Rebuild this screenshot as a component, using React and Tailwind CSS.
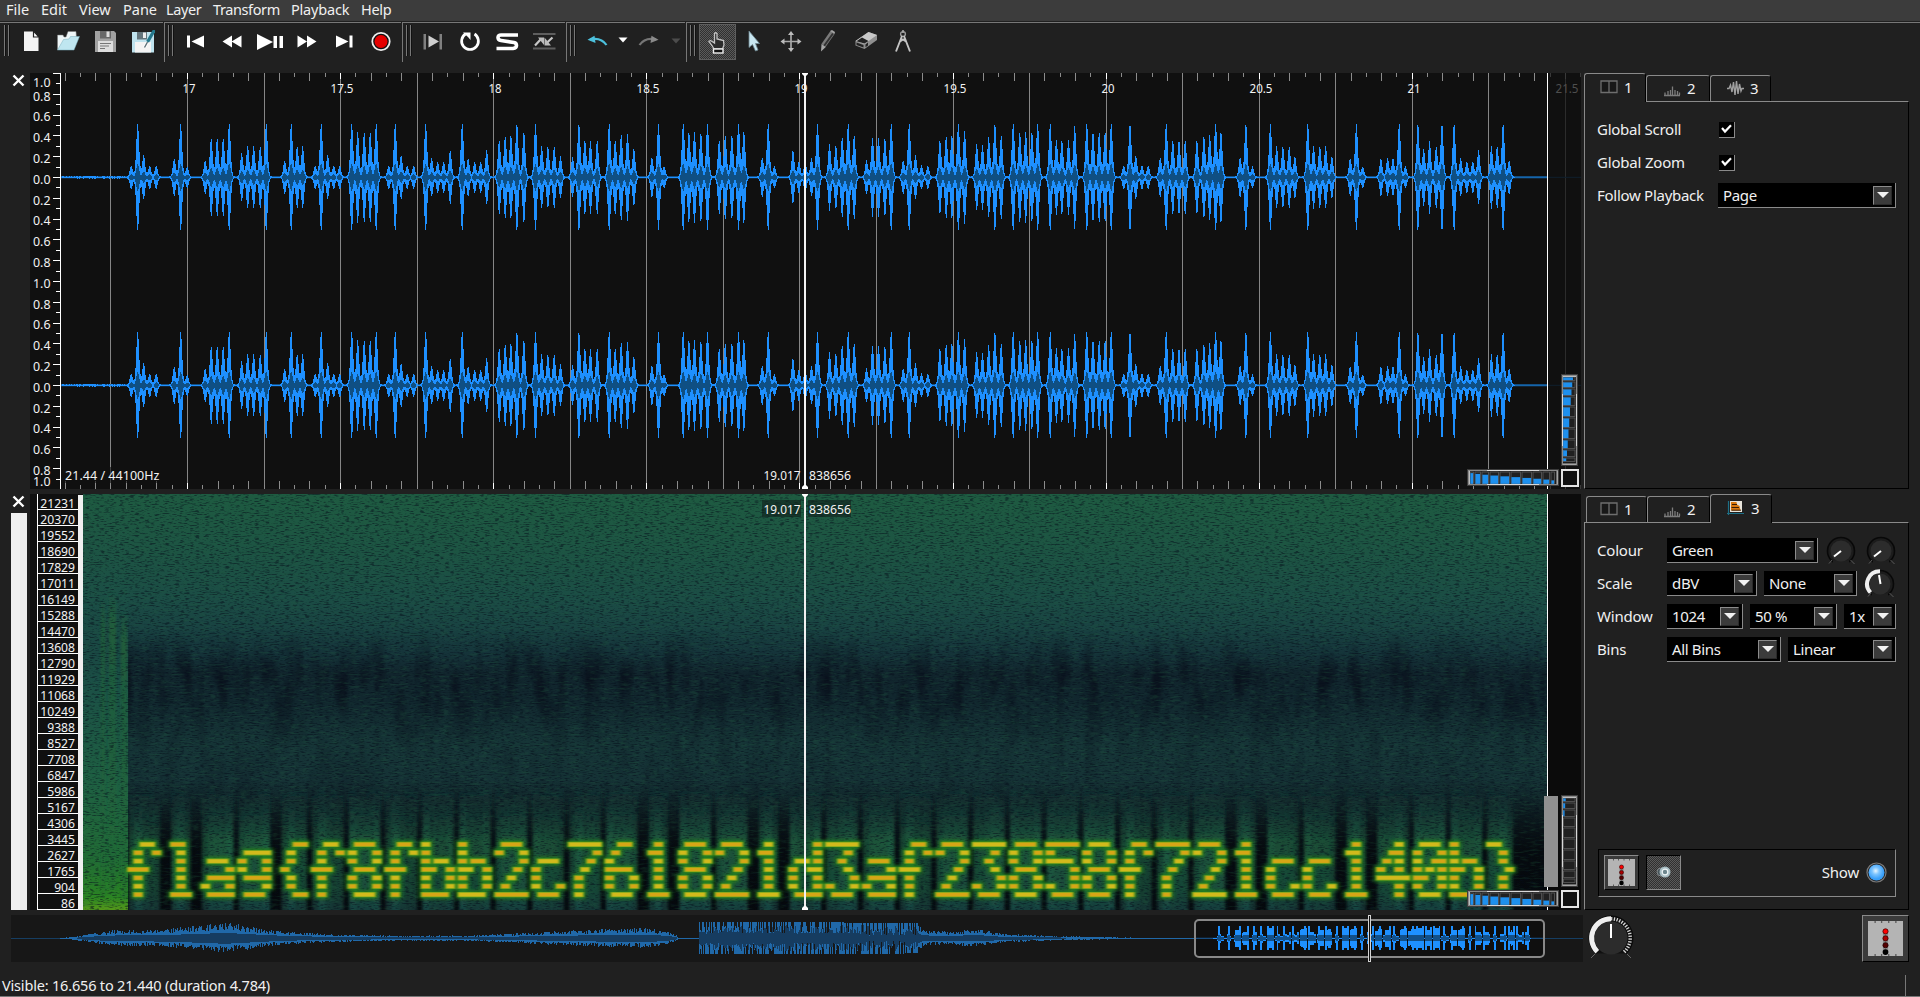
import React from "react";

const PEAKS = [
  [131, 11], [137.5, 53], [143.5, 21], [149.5, 11], [156, 11],
  [174, 18], [180.5, 53], [187, 10],
  [205, 16], [211, 38], [217, 38], [223, 38], [229, 53],
  [241.5, 23], [247.5, 30], [253.5, 30], [260, 30], [266, 53],
  [284.5, 16], [291, 53], [297, 30], [302.5, 30],
  [315, 11], [321, 53], [327.5, 21], [333.5, 11], [339.5, 11],
  [351.5, 53], [357.5, 44], [364, 44], [370, 44], [376, 53],
  [388.5, 11], [395, 53], [401, 21], [407, 11], [413.5, 11],
  [425.5, 53], [431.5, 18], [437.5, 15], [443.5, 15], [450, 26],
  [462, 53], [468, 18], [474.5, 15], [480.5, 15], [486.5, 26],
  [499, 36], [505, 40], [510.7, 41], [516.7, 53], [523.7, 45],
  [535.3, 53], [541.5, 30], [547.7, 30], [554, 30], [560.3, 20],
  [572.3, 19], [578.7, 53], [584.7, 36], [590.3, 35], [597, 36],
  [609, 53], [615, 36], [621, 42], [627.3, 42], [633.7, 28],
  [651.7, 19], [658.3, 53], [664, 10],
  [683, 53], [688.7, 44], [694.3, 44], [700.7, 44], [707.3, 53],
  [719, 36], [725, 41], [731.7, 41], [738.3, 53], [743.7, 45],
  [762, 19], [768, 53], [774.3, 10],
  [792.7, 26], [798.7, 15], [805, 15], [811.3, 18], [817.3, 53],
  [829.3, 32], [835.7, 31], [842, 39], [848, 53], [854, 41],
  [866.3, 16], [872.3, 38], [878.3, 38], [884.7, 38], [891, 53],
  [903, 16], [909, 53], [915.3, 21], [921.3, 11], [927.7, 11],
  [939.7, 36], [946, 40], [951.7, 41], [958.2, 53], [964.4, 45],
  [976.5, 32], [982.3, 31], [988.5, 39], [994.7, 53], [1001, 41],
  [1013, 53], [1019.6, 44], [1025.5, 44], [1031.7, 44], [1037.5, 53],
  [1050, 53], [1056.2, 36], [1061.7, 36], [1068.3, 36], [1074.5, 50],
  [1086.6, 53], [1092.8, 44], [1099, 44], [1104.9, 44], [1111, 53],
  [1123.5, 11], [1129.8, 53], [1135.6, 21], [1141.8, 11], [1148, 11],
  [1160, 19], [1166, 53], [1172.6, 36], [1178.8, 36], [1185, 36],
  [1196.7, 36], [1203.7, 40], [1209.5, 41], [1215.4, 53], [1220.8, 45],
  [1239.9, 19], [1245.7, 53], [1252.3, 10],
  [1270.2, 53], [1276.5, 30], [1282.7, 30], [1289, 30], [1294.7, 20],
  [1307.6, 53], [1313.4, 30], [1319.6, 30], [1325.5, 30], [1331.7, 20],
  [1350, 18], [1356.2, 53], [1362.5, 10],
  [1380.7, 18], [1387.4, 18], [1392.8, 18], [1399, 53], [1405.3, 10],
  [1417.7, 53], [1423.5, 27], [1429.4, 35], [1436, 30], [1441.8, 53],
  [1453.9, 53], [1460.5, 18], [1466.7, 15], [1472.6, 15], [1478.4, 26],
  [1491.2, 30], [1497, 30], [1502.9, 53], [1509, 16],
];

const GLYPHS = {
  f: "..##. .#..# .#... ###.. .#... .#... .#...",
  l: ".##.. ..#.. ..#.. ..#.. ..#.. ..#.. .###.",
  a: "..... ..... .###. ....# .#### #...# .####",
  g: "..... .#### #...# #...# .#### ....# .###.",
  "{": "...## ..#.. ..#.. .#... ..#.. ..#.. ...##",
  8: ".###. #...# #...# .###. #...# #...# .###.",
  b: "#.... #.... #.##. ##..# #...# #...# ####.",
  2: ".###. #...# ....# ...#. ..#.. .#... #####",
  c: "..... ..... .###. #.... #.... #...# .###.",
  7: "##### ....# ...#. ..#.. .#... .#... .#...",
  6: "..##. .#... #.... ####. #...# #...# .###.",
  1: "..#.. .##.. ..#.. ..#.. ..#.. ..#.. .###.",
  d: "....# ....# .##.# #..## #...# #...# .####",
  3: "##### ...#. ..#.. ...#. ....# #...# .###.",
  5: "##### #.... ####. ....# ....# #...# .###.",
  4: "...#. ..##. .#.#. #..#. ##### ...#. ...#.",
  0: ".###. #...# #..## #.#.# ##..# #...# .###.",
  "}": "##... ..#.. ..#.. ...#. ..#.. ..#.. ##...",
};
const MESSAGE = "flag{f8fbb2c761821d3af23858f721cc140b}";

const SANS = '"Noto Sans", "Open Sans", sans-serif';

const rand = (n) => {
  const s = Math.sin(n * 127.1 + 11.7) * 43758.5453;
  return s - Math.floor(s);
};

/* Horizontal runs of lit cells and the list of lit columns in the spectrum message */
const RUNS = [];
const COLUMNS = [];
MESSAGE.split("").forEach((ch, k) => {
  const rows = GLYPHS[ch].split(" ");
  const x0 = 132 + 36.73 * k;
  rows.forEach((row, r) => {
    let c = 0;
    while (c < 5) {
      if (row[c] === "#") {
        let e = c;
        while (e < 4 && row[e + 1] === "#") e += 1;
        RUNS.push([x0 + 6.12 * c, x0 + 6.12 * e, 844.4 + 8.37 * r]);
        c = e + 1;
      } else c += 1;
    }
  });
  for (let c = 0; c < 5; c += 1) {
    const n = rows.filter((row) => row[c] === "#").length;
    if (n) COLUMNS.push([x0 + 6.12 * c, n]);
  }
});

function buildWave(cy) {
  let outer = "";
  let inner = "";
  for (let x = 62; x < 1515; x += 1) {
    let a = 0.6;
    let m = 0.4;
    if (x < 129) a = 0.4 + rand(x) * 1;
    PEAKS.forEach(([p, h]) => {
      const d = Math.abs(x - p + 0.3);
      if (d < 8) {
        a += h * (0.88 * Math.exp(-((d / 1.9) ** 2)) + 0.14 * Math.exp(-((d / 3) ** 2)));
        m += h * 0.25 * Math.exp(-((d / 2) ** 2));
      }
    });
    a = Math.min(a, 53);
    m = Math.min(m, a * 0.6);
    outer += `M${x + 0.5} ${(cy - a).toFixed(1)}V${(cy + a).toFixed(1)}`;
    if (m > 1) inner += `M${x + 0.5} ${(cy - m).toFixed(1)}V${(cy + m).toFixed(1)}`;
  }
  return { outer, inner };
}

function Wave({ cy }) {
  const w = buildWave(cy);
  return (
    <g fill="none">
      <path d={`M61 ${cy}H1547`} stroke="#1565ab" strokeWidth="2" />
      <path d={`M1548 ${cy}H1581`} stroke="#10202e" strokeWidth="1" />
      <path d={w.outer} stroke="#1e90ff" shapeRendering="crispEdges" />
      <path d={w.inner} stroke="#0f4f83" shapeRendering="crispEdges" />
    </g>
  );
}

const PX = 306.2;
const timeX = (t) => Math.round(187 + (t - 17) * PX);

function TimeGrid() {
  const lines = [];
  for (let i = 0; i <= 101; i += 1) {
    const t = 16.6 + i * 0.05;
    const x = timeX(t) + 0.5;
    if (x > 1581) break;
    const n = Math.round(t * 20);
    const dim = x > 1549;
    const major = n % 10 === 0;
    if (n % 5 === 0) lines.push(<path key={`g${i}`} d={`M${x} 73V489`} stroke={dim ? "#2c2c2c" : "#868686"} />);
    const len = major ? 6 : n % 2 === 0 ? 8 : 4;
    lines.push(
      <path key={i} d={`M${x} 73v${len}M${x} 489v-${len}`} stroke={dim ? "#3a3a3a" : major ? "#ffffff" : "#8c8c8c"} />
    );
  }
  return <g>{lines}</g>;
}

function Wheel({ x, y, vertical, level }) {
  const edges = [0, 5, 12, 20, 30, 41, 52, 63, 73, 81, 86];
  const len = 86;
  return (
    <g transform={vertical ? `translate(${x + 17} ${y}) rotate(90)` : `translate(${x} ${y})`}>
      <rect x="0.5" y="0.5" width="91" height="16" fill="#161616" stroke="#3c3c3c" />
      <rect x="1.5" y="1.5" width="89" height="14" fill="#1b1b1b" stroke="#8a8a8a" />
      <path d="M20 1.5H72M20 15.5H72" stroke="#d8d8d8" />
      {edges.slice(0, 10).map((e, i) => {
        const w = edges[i + 1] - e - 1.5;
        const h = level(i) * 11.5;
        return (
          <g key={e}>
            <rect x={3 + e} y="3" width={w} height="11.5" fill="#202020" stroke="#5c5c5c" strokeWidth="0.8" />
            {h > 0 && <rect x={3.4 + e} y={14.8 - h} width={Math.max(w - 0.8, 1)} height={h} fill="#1e90ee" />}
          </g>
        );
      })}
      <path d={`M2.5 2V15M${len + 4} 2V15`} stroke="#bdbdbd" />
    </g>
  );
}

function Txt({ x, y, w, anchor = "start", fill = "#f2f2f2", size = 12, children }) {
  return (
    <text x={x} y={y} fontSize={size} fill={fill} textAnchor={anchor} fontFamily={SANS} textLength={w} lengthAdjust="spacingAndGlyphs">
      {children}
    </text>
  );
}

function WaveformPane() {
  const labels = [];
  const halves = [[177.3, true], [385.3, false]];
  halves.forEach(([c, first]) => {
    for (let i = -4; i <= 4; i += 1) {
      labels.push([c + 2 + i * 20.8, (Math.abs(i) / 5).toFixed(1)]);
    }
    labels.push([first ? 82 : 481.5, "1.0"]);
  });
  labels.push([283.5, "1.0"]);
  const ticks = [];
  for (let i = 0; i <= 40; i += 1) {
    const y = Math.round(73 + i * 10.4) + 0.5;
    if (y < 489) ticks.push(`M${i % 2 ? 56 : 53} ${y}H61`);
  }
  return (
    <svg className="block h-[416px] w-[1551px]" viewBox="30 73 1551 416">
      <rect x="30" y="73" width="1551" height="416" fill="#101010" />
      <TimeGrid />
      <Wave cy={177.3} />
      <Wave cy={385.3} />
      <path d="M60.5 73V489" stroke="#fff" />
      <path d={ticks.join("")} stroke="#fff" shapeRendering="crispEdges" />
      {labels.map(([y, s], i) => (
        <Txt key={i} x={50.5} y={y + 4.5} anchor="end" w={17.5}>{s}</Txt>
      ))}
      {["17", "17.5", "18", "18.5", "19", "19.5", "20", "20.5", "21", "21.5"].map((s) => (
        <Txt key={s} x={timeX(Number(s)) + 2} y={93} anchor="middle" w={s.length === 2 ? 13 : 23} fill={s === "21.5" ? "#4e4e4e" : "#f4f4f4"}>
          {s}
        </Txt>
      ))}
      <rect x="64" y="467" width="96" height="16" fill="#101010" opacity="0.6" />
      <Txt x={65} y={480} w={94.5}>21.44 / 44100Hz</Txt>
      <Txt x={763.5} y={480} w={37}>19.017</Txt>
      <Txt x={809} y={480} w={42}>838656</Txt>
      <rect x="804" y="73" width="2" height="416" fill="#f4f4f4" />
      <path d="M802 73h6v1l-2 2h-2l-2-2zM802 489h6v-2l-2-2h-2l-2 2z" fill="#fff" />
      <path d="M1547.5 73V489" stroke="#fff" />
      <Wheel x={1561} y={374} vertical level={(i) => 0.85 - i * 0.065} />
      <Wheel x={1467} y={469} level={(i) => 0.93 - i * 0.07} />
      <rect x="1562" y="470" width="16" height="16" fill="#101010" stroke="#e4e4e4" strokeWidth="2" />
    </svg>
  );
}

const BINS = [
  21231, 20370, 19552, 18690, 17829, 17011, 16149, 15288, 14470, 13608, 12790, 11929, 11068, 10249,
  9388, 8527, 7708, 6847, 5986, 5167, 4306, 3445, 2627, 1765, 904, 86,
];

function SpectrumDefs() {
  return (
    <defs>
      <linearGradient id="base" x1="0" y1="0" x2="0" y2="1">
        <stop offset="0" stopColor="#1e5b41" />
        <stop offset="0.12" stopColor="#1d5543" />
        <stop offset="0.25" stopColor="#1b4d45" />
        <stop offset="0.32" stopColor="#194342" />
        <stop offset="0.38" stopColor="#15343a" />
        <stop offset="0.43" stopColor="#11252d" />
        <stop offset="0.5" stopColor="#11272e" />
        <stop offset="0.6" stopColor="#163537" />
        <stop offset="0.72" stopColor="#153135" />
        <stop offset="0.82" stopColor="#122529" />
        <stop offset="1" stopColor="#0c181c" />
      </linearGradient>
      <linearGradient id="intro" x1="0" y1="0" x2="0" y2="1">
        <stop offset="0" stopColor="#1f5b44" stopOpacity="0" />
        <stop offset="0.3" stopColor="#1b4f46" stopOpacity="0.5" />
        <stop offset="0.45" stopColor="#1b4f46" />
        <stop offset="0.7" stopColor="#1e6042" />
        <stop offset="0.88" stopColor="#216c34" />
        <stop offset="0.97" stopColor="#2b8522" />
        <stop offset="1" stopColor="#55991a" />
      </linearGradient>
      <linearGradient id="streak" x1="0" y1="0" x2="0" y2="1">
        <stop offset="0" stopColor="#206438" stopOpacity="0" />
        <stop offset="0.1" stopColor="#206438" stopOpacity="0.75" />
        <stop offset="1" stopColor="#206438" stopOpacity="0.3" />
      </linearGradient>
      <linearGradient id="glow" gradientUnits="userSpaceOnUse" x1="0" y1="785" x2="0" y2="910">
        <stop offset="0" stopColor="#1a443e" stopOpacity="0" />
        <stop offset="0.25" stopColor="#1b4e42" stopOpacity="0.6" />
        <stop offset="0.45" stopColor="#1e5e40" stopOpacity="0.95" />
        <stop offset="0.85" stopColor="#1c5642" stopOpacity="0.95" />
        <stop offset="1" stopColor="#1a4846" stopOpacity="0.9" />
      </linearGradient>
      <linearGradient id="dark" gradientUnits="userSpaceOnUse" x1="0" y1="780" x2="0" y2="850">
        <stop offset="0" stopColor="#04060a" stopOpacity="0" />
        <stop offset="1" stopColor="#04060a" stopOpacity="0.85" />
      </linearGradient>
      <filter id="grainDark" x="0" y="0" width="1" height="1" colorInterpolationFilters="sRGB">
        <feTurbulence type="fractalNoise" baseFrequency="0.2 0.9" numOctaves="2" seed="4" />
        <feColorMatrix values="0 0 0 0 0.02  0 0 0 0 0.05  0 0 0 0 0.1  4 0 0 0 -2.0" />
      </filter>
      <filter id="grainLight" x="0" y="0" width="1" height="1" colorInterpolationFilters="sRGB">
        <feTurbulence type="fractalNoise" baseFrequency="0.1 0.5" numOctaves="2" seed="19" />
        <feColorMatrix values="0 0 0 0 0.13  0 0 0 0 0.36  0 0 0 0 0.25  0 3.5 0 0 -1.7" />
      </filter>
      <filter id="bands" x="0" y="0" width="1" height="1" colorInterpolationFilters="sRGB">
        <feTurbulence type="fractalNoise" baseFrequency="0.06 0.016" numOctaves="2" seed="8" />
        <feColorMatrix values="0 0 0 0 0.03  0 0 0 0 0.04  0 0 0 0 0.09  3.5 0 0 0 -1.6" />
      </filter>
      <filter id="b1" x="-5%" y="-20%" width="110%" height="140%"><feGaussianBlur stdDeviation="0.8 0.6" /></filter>
      <filter id="b2" x="-5%" y="-20%" width="110%" height="140%"><feGaussianBlur stdDeviation="1.9 1.6" /></filter>
      <filter id="bx" x="-5%" y="-5%" width="110%" height="110%"><feGaussianBlur stdDeviation="1.6 0" /></filter>
      <linearGradient id="midFade" x1="0" y1="0" x2="0" y2="1">
        <stop offset="0" stopColor="#000" />
        <stop offset="0.25" stopColor="#fff" />
        <stop offset="0.45" stopColor="#555" />
        <stop offset="0.7" stopColor="#333" />
        <stop offset="1" stopColor="#444" />
      </linearGradient>
      <mask id="mid"><rect x="128" y="630" width="1420" height="210" fill="url(#midFade)" /></mask>
      <clipPath id="plot"><rect x="83" y="494" width="1464" height="416" /></clipPath>
    </defs>
  );
}

function SpectrumPane() {
  return (
    <svg className="block h-[416px] w-[1551px]" viewBox="30 494 1551 416">
      <SpectrumDefs />
      <rect x="30" y="494" width="1551" height="416" fill="#0b0b0b" />
      <g clipPath="url(#plot)">
        <rect x="83" y="494" width="1464" height="416" fill="url(#base)" />
        <g mask="url(#mid)">
          <rect x="128" y="630" width="1420" height="210" filter="url(#bands)" opacity="0.7" />
        </g>
        <rect x="128" y="780" width="1420" height="130" fill="url(#dark)" />
        <g filter="url(#bx)">
          {COLUMNS.map(([x, n], i) => (
            <rect key={i} x={x - 3.4} y={785 + rand(i) * 14} width="6.8" height="130" fill="url(#glow)" opacity={0.6 + Math.min(n, 4) * 0.1} />
          ))}
        </g>
        <rect x="83" y="494" width="45" height="416" fill="url(#intro)" />
        <g filter="url(#bx)">
          <rect x="101" y="596" width="4" height="300" fill="url(#streak)" />
          <rect x="109" y="590" width="7" height="300" fill="url(#streak)" />
          <rect x="121" y="610" width="6" height="290" fill="url(#streak)" />
        </g>
        <rect x="83" y="494" width="1464" height="416" filter="url(#grainLight)" opacity="0.28" />
        <rect x="83" y="494" width="1464" height="416" filter="url(#grainDark)" opacity="0.5" />
        <g filter="url(#b2)" fill="#22831f">
          {RUNS.map(([a, b, y], i) => <rect key={i} x={a - 6.5} y={y - 4.2} width={b - a + 13} height="8.4" opacity="0.9" />)}
        </g>
        <g filter="url(#b1)">
          {RUNS.map(([a, b, y], i) => <rect key={i} x={a - 5} y={y - 2.6} width={b - a + 10} height="5.2" fill="#86a81c" />)}
          {RUNS.map(([a, b, y], i) => (
            <rect key={`c${i}`} x={a - 3.8} y={y - 1.8} width={b - a + 7.6} height="3.6" fill={i % 3 ? "#d6a616" : "#d2ba1c"} />
          ))}
        </g>
      </g>
      <rect x="30" y="494" width="53" height="416" fill="#101010" />
      <path d="M37.5 494V910" stroke="#fff" />
      <rect x="78" y="495" width="5" height="415" fill="#f0f0f0" />
      {BINS.map((b, i) => (
        <g key={b}>
          <path d={`M37 ${509.5 + 16 * i}H78`} stroke="#fff" />
          <Txt x={75} y={508 + 16 * i} anchor="end" w={String(b).length * 6.95}>{b}</Txt>
        </g>
      ))}
      <rect x="762" y="500" width="39" height="17" fill="#10201c" opacity="0.6" />
      <rect x="808" y="500" width="43" height="17" fill="#10201c" opacity="0.6" />
      <Txt x={763.5} y={514} w={37}>19.017</Txt>
      <Txt x={809} y={514} w={42}>838656</Txt>
      <rect x="804" y="494" width="2" height="416" fill="#f0f0f0" />
      <path d="M802 494h6v1l-2 2h-2l-2-2zM802 910h6v-2l-2-2h-2l-2 2z" fill="#fff" />
      <path d="M1547.5 494V910" stroke="#fff" />
      <rect x="1544" y="796" width="14" height="91" fill="#909090" />
      <Wheel x={1561} y={795} vertical level={(i) => (i < 3 ? 0.22 - i * 0.05 : 0)} />
      <Wheel x={1467} y={890} level={(i) => 0.93 - i * 0.07} />
      <rect x="1562" y="891" width="16" height="16" fill="#101010" stroke="#e4e4e4" strokeWidth="2" />
    </svg>
  );
}

const ENVELOPE = [
  [60, 0.5], [72, 1.5], [90, 5], [115, 8.5], [150, 9], [190, 12], [225, 16], [245, 13], [270, 9], [300, 6], [340, 4],
  [400, 2.8], [470, 3], [510, 5], [560, 7.5], [610, 10], [650, 10.5], [668, 7], [676, 3], [678, 0.7], [698, 0.7],
  [699, 16], [830, 16], [918, 15], [922, 9], [950, 6.5], [966, 9], [980, 9], [1000, 5], [1040, 3], [1080, 2], [1120, 1], [1194, 0.5],
];
function envelopeAt(x) {
  for (let i = 1; i < ENVELOPE.length; i += 1) {
    const [x1, v1] = ENVELOPE[i];
    if (x <= x1) {
      const [x0, v0] = ENVELOPE[i - 1];
      return v0 + ((x - x0) / (x1 - x0)) * (v1 - v0);
    }
  }
  return 0.5;
}

function Overview() {
  let outer = "";
  let inner = "";
  const cy = 938.3;
  for (let x = 60; x < 1194; x += 1) {
    const e = envelopeAt(x);
    const dense = x >= 699 && x < 918;
    const low = x < 860 ? 0.3 : 0.15;
    const up = dense ? (rand(x) > 0.38 ? e : e * (low + 0.5 * rand(x * 3))) : e * (0.5 + 0.5 * rand(x));
    const dn = dense ? (rand(x + 900) > 0.38 ? e : e * (low + 0.5 * rand(x * 5))) : e * (0.45 + 0.45 * rand(x + 500));
    outer += `M${x + 0.5} ${(cy - up).toFixed(1)}V${(cy + dn).toFixed(1)}`;
    const m = dense ? Math.min(e * (0.3 + 0.55 * rand(x * 7)), up, dn) : e * 0.34;
    if (m > 0.8) inner += `M${x + 0.5} ${(cy - m).toFixed(1)}V${(cy + m).toFixed(1)}`;
  }
  let live = "";
  let liveIn = "";
  for (let x = 1213; x < 1531; x += 1) {
    let a = 0.6;
    PEAKS.forEach(([p, h]) => {
      if (Math.abs(1218.7 + (p - 137.5) * 0.2263 - x) < 0.9) a = Math.max(a, h * 0.226);
    });
    live += `M${x + 0.5} ${cy - a}V${cy + a}`;
    if (a > 1.5) liveIn += `M${x + 0.5} ${cy - Math.min(a * 0.5, 3)}V${cy + Math.min(a * 0.5, 3)}`;
  }
  return (
    <svg className="block h-[47px] w-[1572px]" viewBox="11 915 1572 47">
      <rect x="11" y="915" width="1572" height="47" fill="#171717" />
      <path d="M11 938.5H1583" stroke="#163e62" />
      <path d={outer} stroke="#2068a8" shapeRendering="crispEdges" />
      <path d={inner} stroke="#163c60" shapeRendering="crispEdges" />
      <rect x="1195" y="920" width="349" height="37" rx="4" fill="#0f0f0f" stroke="#888" strokeWidth="2" />
      <path d="M1196 938.3H1543" stroke="#1a5c9a" />
      <path d={live} stroke="#1e90ff" shapeRendering="crispEdges" />
      <path d={liveIn} stroke="#125089" shapeRendering="crispEdges" />
      <rect x="1368.5" y="915.5" width="2" height="46" fill="#101010" stroke="#d4d4d4" />
    </svg>
  );
}

function Combo({ label, className }) {
  return (
    <div className={`flex h-[25px] shrink-0 items-center justify-between border-b border-r border-[#8a8a8a] bg-black pl-[5px] pr-[3px] text-[15px] leading-none ${className}`}>
      <span className="tracking-[-0.35px]">{label}</span>
      <span className="flex h-[19px] w-[19px] items-center justify-center border border-[#8c8c8c] border-b-[#2a2a2a] border-r-[#2a2a2a] bg-[#3b3b3b]">
        <svg className="h-[6px] w-[12px]" viewBox="0 0 12 6"><path d="M0 0H12L6 6Z" fill="#f2f2f2" /></svg>
      </span>
    </div>
  );
}

function Knob({ arc }) {
  return (
    <svg className="block h-[30px] w-[32px] shrink-0" viewBox="-16 -15 32 30">
      <circle r="13.5" fill="#1c1c1c" stroke="#080808" strokeWidth="1.6" />
      <rect x="-8" y="9.5" width="16" height="6" fill="#202020" />
      <circle r="10.5" fill="#2c2c2c" />
      <path d="M-9 9l-3 3.5M9.500 9l4 4" stroke="#5a5a5a" />
      {arc ? (
        <>
          <path d="M-9.500 8.500A12.600 12.600 0 0 1 0 -12.700" fill="none" stroke="#f0f0f0" strokeWidth="4" />
          <path d="M-1 -9L0.500 0" stroke="#fff" strokeWidth="2" />
        </>
      ) : (
        <path d="M-7 5.500L0 0" stroke="#fff" strokeWidth="2" />
      )}
    </svg>
  );
}

function TabIcon({ kind }) {
  return (
    <svg className="h-[17px] w-[18px] shrink-0" viewBox="0 0 18 17">
      {kind === "pane" && <path d="M1 2H17V13.500H1ZM9 2V13.500" fill="#181818" stroke="#6e6e6e" strokeWidth="1.3" />}
      {kind === "ruler" && <path d="M1 15.500H17M2 15V12.500M5 15V11M7.500 15V10M9.500 15V6.500M12 15V10M14.500 15V11M16.500 15V12.500" stroke="#7c7c7c" strokeWidth="1.3" />}
      {kind === "wave" && <path d="M1 8.500H3L4.500 5L6 12L7.500 2L9 15L10.500 1L12 14L13.500 4L15 11L16 8.500H18" fill="none" stroke="#a0a0a0" strokeWidth="1.4" />}
      {kind === "spectrum" && (
        <>
          <path d="M1.500 1V15M0 13.500H17" stroke="#1d6f86" strokeWidth="1.2" />
          <rect x="3" y="1" width="12" height="11" fill="#e8e4dc" />
          <path d="M4 2H9.500L10 4.500L12.500 6L13.500 10.500H4Z" fill="#d9780f" />
          <path d="M5 4.500H10M4.500 7.500H12M4.500 10.200H14" stroke="#3a1c03" strokeWidth="1" />
        </>
      )}
    </svg>
  );
}

function Tab({ n, kind, active, className }) {
  return (
    <div
      className={`flex items-center gap-[6px] rounded-t-[3px] border-t border-l border-r border-[#8a8a8a] border-r-black text-[15px] leading-none ${
        active ? "relative z-10 h-[29px] -mb-px bg-[#202020] pb-[1px]" : "h-[26px]"
      } ${className}`}
    >
      <TabIcon kind={kind} />
      <span>{n}</span>
    </div>
  );
}

function TabPanel({ tabs, indent, children }) {
  return (
    <div className="flex h-[416px] w-[325px] flex-col">
      <div className={`flex h-[28px] items-end ${indent}`}>{tabs}</div>
      <div className="flex flex-1 flex-col border border-[#8a8a8a] border-b-black border-r-black px-3">{children}</div>
    </div>
  );
}

function Fader({ className }) {
  return (
    <svg className={className} viewBox="0 0 27 27">
      <rect width="27" height="27" fill="#b4b4b4" />
      <path d="M5.500 0V1.500M10.500 0V1.500M16 0V1.500M21.500 0V1.500M5.500 25.500V27M10.500 25.500V27M16 25.500V27M21.500 25.500V27" stroke="#5a5a5a" />
      <rect x="11.5" y="6.500" width="4" height="19" fill="#8a8a8a" />
      <circle cx="13.500" cy="8" r="2" fill="#f00" stroke="#400" strokeWidth="0.6" />
      <circle cx="13.500" cy="13.400" r="2" fill="#a00" stroke="#300" strokeWidth="0.6" />
      <circle cx="13.500" cy="18.700" r="2" fill="#500" stroke="#200" strokeWidth="0.6" />
      <circle cx="13.500" cy="24" r="2.200" fill="#000" />
    </svg>
  );
}

function Check() {
  return (
    <span className="flex h-4 w-4 items-center justify-center border-b border-r border-[#8a8a8a] bg-black">
      <svg className="h-[10px] w-[11px]" viewBox="0 0 11 10"><path d="M1 4L4 7.500L10 1.200" fill="none" stroke="#fff" strokeWidth="2.200" /></svg>
    </span>
  );
}

function Handle() {
  return (
    <div className="flex gap-[2px]">
      <span className="h-[31px] w-[2px] border-l border-[#777] bg-[#111]" />
      <span className="h-[31px] w-[2px] border-l border-[#777] bg-[#111]" />
    </div>
  );
}

const ICONS = {
  file: <><path d="M4 1.500H13.500L18.500 7V21H4Z" fill="#f4f4f4" /><path d="M13.500 1V7H19Z" fill="#fff" stroke="#222" strokeWidth="1.200" /></>,
  open: <><path d="M0.500 20V5H6L7 7H9L11 1.500H19L19.500 8Z" fill="#eef6f8" stroke="#777" strokeWidth="0.500" /><path d="M0.500 20L6.500 9.500L12 9L13.500 6.500H22.500L17 20Z" fill="#bfe6f0" stroke="#79aebd" strokeWidth="0.500" /></>,
  save: <><path d="M1 1H20L22 3V22H1Z" fill="#a2a2a2" /><rect x="6" y="1" width="11" height="7.500" fill="#686868" /><rect x="12.500" y="1.500" width="3" height="5.500" fill="#ddd" /><rect x="4" y="11" width="15" height="11" fill="#dedede" /><path d="M6 13.500H17M6 16H15M6 18.500H11" stroke="#777" /></>,
  saveas: <><path d="M0 2H22V22.500H0Z" fill="#bfe3ee" /><rect x="5" y="2" width="10" height="7.500" fill="#64757c" /><rect x="11" y="2.500" width="3" height="5.500" fill="#eee" /><rect x="3" y="12" width="16" height="10.500" fill="#f4f4f4" /><path d="M22.500 0L15.500 12" stroke="#24788c" strokeWidth="3.200" /><path d="M15.500 12L12.500 17.500" stroke="#fff" strokeWidth="3" /><path d="M15.500 12L12.500 17.500" stroke="#5d7178" strokeWidth="1.400" /></>,
  start: <path d="M3 5.500H6V17.500H3ZM20 5.500V17.500L7.500 11.500Z" fill="#fff" />,
  rew: <path d="M11 5.500V17.500L1.500 11.500ZM20.500 5.500V17.500L10.500 11.500Z" fill="#fff" />,
  ff: <path d="M1.500 5.500V17.500L11 11.500ZM11 5.500V17.500L20.500 11.500Z" fill="#fff" />,
  end: <path d="M3 5.500V17.500L15.500 11.500ZM16.500 5.500H19.500V17.500H16.500Z" fill="#fff" />,
  rec: <><circle cx="11" cy="11.500" r="8.700" fill="#111" stroke="#eee" strokeWidth="1.800" /><circle cx="11" cy="11.500" r="6.500" fill="#e50000" /></>,
  playsel: <><path d="M1.500 4H4V19.500H1.500ZM17.500 4H20V19.500H17.500Z" fill="#808080" /><path d="M6.500 5.500V17.500L17 11.500Z" fill="#cfcfcf" /></>,
  loop: <><path d="M6.500 4A8.400 8.400 0 1 0 15.500 4" fill="none" stroke="#fff" strokeWidth="2.700" /><path d="M4 2.500H11.500V10L9 7Z" fill="#fff" /></>,
  solo: <path d="M22 5H5Q2 5 2 7.500T5 10.500L18 12.500Q20.500 13 20.500 15.500T17 18.500H0.500" fill="none" stroke="#fff" strokeWidth="3.600" />,
  align: <><path d="M0 4H22.500M0 18.500H22.500" stroke="#5e5e5e" strokeWidth="2.200" /><path d="M2 15.500L8.500 8.500M12.500 14L19.500 7.500" stroke="#c8c8c8" strokeWidth="2.200" /><path d="M5 7.500H11V15ZM11.500 7.500V15.500H18Z" fill="#bdbdbd" /></>,
  undo: <><path d="M4 9.500Q15 7 20.500 15" fill="none" stroke="#4cc0dc" strokeWidth="2.200" /><path d="M1.500 9.700L8.500 5.800L9.500 13Z" fill="#4cc0dc" /></>,
  redo: <><path d="M18 9.500Q7 7 1.500 15" fill="none" stroke="#767676" strokeWidth="2.200" /><path d="M20.500 9.700L13.500 5.800L12.500 13Z" fill="#8a8a8a" /></>,
  hand: <><path d="M8 18L6 14.500L3 10.500L4.500 9.500L8.500 12V2.500Q9.700 1 11 2.500V8L17.500 9.500L18 14L16.500 18Z" fill="#2c2c2c" stroke="#c4c4c4" strokeWidth="1.300" /><rect x="7.500" y="18" width="9.500" height="4" fill="#111" stroke="#eee" strokeWidth="1.400" /></>,
  arrow: <path d="M6 1V17.500L9.500 14.500L12.500 21L15 20L12.500 13.500H16.500Z" fill="#c8e6f0" stroke="#6d8790" strokeWidth="0.800" />,
  move: <><path d="M11 3V20M2.500 11.500H19.500" stroke="#a8a8a8" strokeWidth="1.700" /><path d="M11 1L14 5H8ZM11 22L14 18H8ZM0.500 11.500L4.500 8.500V14.500ZM21.500 11.500L17.500 8.500V14.500Z" fill="#bcbcbc" /></>,
  pencil: <><path d="M15.500 2.500L6.500 15.500" stroke="#7a7a7a" strokeWidth="5" /><path d="M16 3.500L7 16" stroke="#323232" strokeWidth="2" /><path d="M13 1L17.500 4L18 2L15 0ZM4.500 14L8.800 17L4 21.500Z" fill="#a5a5a5" /></>,
  eraser: <><path d="M0.500 11L13.500 2L22 5L22 10L9.500 19L0.500 15.500Z" fill="#8f8f8f" /><path d="M0.500 11L13.500 2L22 5L9.500 14Z" fill="#c8c8c8" /><path d="M1.500 11.200L7 7.500L13.500 11L9.500 13.500ZM1.500 12.500L8.500 15V17.500L1.500 15ZM10.500 14.500L13 12.500V15.500L10.500 17.300Z" fill="#222" /></>,
  compass: <><circle cx="11" cy="4" r="2.400" fill="none" stroke="#9a9a9a" strokeWidth="1.400" /><path d="M10 6L4 21.500M12 6L18 21.500M8 11.500L11 9.500L14 11.500" fill="none" stroke="#c4c4c4" strokeWidth="1.900" /><path d="M11 0V3" stroke="#aaa" strokeWidth="1.600" /></>,
};

function Tool({ name, className = "w-[37px]" }) {
  return (
    <div className={`flex items-center justify-center pb-[2px] ${className}`}>
      <svg className="h-[23px] w-[23px]" viewBox="0 0 23 23">{ICONS[name]}</svg>
    </div>
  );
}

function Caret({ color, className }) {
  return (
    <div className={`flex items-center ${className}`}>
      <svg className="h-[6px] w-[10px]" viewBox="0 0 10 6"><path d="M0.500 0.500H9.500L5 5.500Z" fill={color} /></svg>
    </div>
  );
}

function Toolbar() {
  const seg = "flex h-full items-stretch border-t border-[#777]";
  const handle = <div className="flex w-[12px] items-center pb-[4px] pl-[3px]"><Handle /></div>;
  return (
    <div className="flex h-[40px] items-stretch">
      <div className={`${seg} mr-[1px] w-[163px] pl-[1px]`}>
        {handle}
        <Tool name="file" /><Tool name="open" /><Tool name="save" /><Tool name="saveas" className="w-[38px]" />
      </div>
      <div className={`${seg} mr-[1px] w-[237px] border-l`}>
        {handle}
        <Tool name="start" /><Tool name="rew" />
        <div className="flex w-[37px] items-center justify-center pb-[2px]">
          <svg className="h-[18px] w-[28px]" viewBox="0 0 28 18"><path d="M1 1V17L17 9ZM17.500 3H21V15H17.500ZM23.500 3H27V15H23.500Z" fill="#fff" /></svg>
        </div>
        <Tool name="ff" className="w-[38px]" /><Tool name="end" /><Tool name="rec" />
      </div>
      <div className={`${seg} mr-[1px] w-[163px] border-l`}>
        {handle}
        <Tool name="playsel" /><Tool name="loop" /><Tool name="solo" /><Tool name="align" />
      </div>
      <div className={`${seg} mr-[1px] w-[119px] border-l`}>
        {handle}
        <Tool name="undo" /><Caret color="#ffffff" className="w-[14px] justify-center pb-[5px]" /><Tool name="redo" className="w-[38px]" /><Caret color="#4c4c4c" className="w-[16px] justify-center pb-[3px]" />
      </div>
      <div className={`${seg} flex-1 border-l`}>
        {handle}
        <div className="mt-[1px] flex h-[36px] w-[37px] items-center justify-center border border-[#5e5e5e] bg-[repeating-conic-gradient(#5a5a5a_0%_25%,#303030_0%_50%)] bg-[length:2px_2px]">
          <svg className="h-[23px] w-[23px]" viewBox="0 0 23 23">{ICONS.hand}</svg>
        </div>
        <Tool name="arrow" /><Tool name="move" /><Tool name="pencil" /><Tool name="eraser" className="w-[38px]" /><Tool name="compass" className="w-[36px]" />
      </div>
    </div>
  );
}

function CloseMark() {
  return (
    <svg className="block h-[13px] w-[13px]" viewBox="0 0 13 13">
      <path d="M1.500 1.500L11.500 11.500M11.500 1.500L1.500 11.500" stroke="#fff" strokeWidth="2.400" />
    </svg>
  );
}

function Row({ label, children }) {
  return (
    <div className="flex h-[33px] items-center">
      <span className="w-[70px] shrink-0 text-[15px] tracking-[-0.2px]">{label}</span>
      <div className="flex items-center gap-[7px]">{children}</div>
    </div>
  );
}

function MasterKnob() {
  const marks = [];
  for (let i = 0; i <= 16; i += 1) {
    const a = ((-88 + i * 8.3) * Math.PI) / 180;
    marks.push(`M${(Math.cos(a) * 17.5).toFixed(2)} ${(Math.sin(a) * 17.5).toFixed(2)}L${(Math.cos(a) * 21).toFixed(2)} ${(Math.sin(a) * 21).toFixed(2)}`);
  }
  return (
    <svg className="block h-[47px] w-[46px]" viewBox="-23 -23 46 47">
      <path d="M-15.500 15.500A22 22 0 1 1 15.500 15.500" fill="#101010" stroke="#080808" />
      <circle r="16.500" fill="#2c2c2c" />
      <path d={marks.join("")} stroke="#d8d8d8" strokeWidth="1.300" />
      <path d="M-13.700 13.700A19.300 19.300 0 0 1 0 -19.300" fill="none" stroke="#f0f0f0" strokeWidth="5" />
      <path d="M0 -14V0" stroke="#fff" strokeWidth="2" />
      <path d="M-16 16l-4 4M16 16l4 4" stroke="#666" />
    </svg>
  );
}

export default function App() {
  return (
    <div className="flex h-[997px] w-[1920px] flex-col overflow-hidden bg-[#202020] font-['Noto_Sans','Open_Sans',sans-serif] text-[#f0f0f0]">
      <div className="flex h-[21px] items-center bg-[#3c3c3c] pb-[2px] pl-[6px] text-[14.5px] leading-none">
        <span className="w-[35px]">File</span>
        <span className="w-[38px]">Edit</span>
        <span className="w-[44px]">View</span>
        <span className="w-[43px]">Pane</span>
        <span className="w-[47px] tracking-[-0.4px]">Layer</span>
        <span className="w-[78px] tracking-[-0.4px]">Transform</span>
        <span className="w-[70px] tracking-[-0.2px]">Playback</span>
        <span className="tracking-[-0.3px]">Help</span>
      </div>
      <div className="pt-[1px]"><Toolbar /></div>
      <div className="flex flex-1 flex-col gap-[5px] pt-[11px]">
        <div className="flex">
          <div className="w-[30px] pl-[12px] pt-[1px]"><CloseMark /></div>
          <WaveformPane />
          <div className="w-[3px]" />
          <TabPanel
            indent="pl-0"
            tabs={<><Tab n="1" kind="pane" active className="w-[62px] pl-[15px]" /><Tab n="2" kind="ruler" className="w-[64px] pl-[16px]" /><Tab n="3" kind="wave" className="w-[61px] pl-[15px]" /></>}
          >
            <div className="mt-[11px] flex h-[33px] items-center text-[15px] tracking-[-0.25px]"><span className="w-[122px]">Global Scroll</span><Check /></div>
            <div className="flex h-[33px] items-center text-[15px] tracking-[-0.2px]"><span className="w-[122px]">Global Zoom</span><Check /></div>
            <div className="flex h-[33px] items-center text-[15px] tracking-[-0.28px]"><span className="w-[121px] shrink-0 whitespace-nowrap">Follow Playback</span><Combo label="Page" className="w-[178px]" /></div>
          </TabPanel>
        </div>
        <div className="flex">
          <div className="flex h-[416px] w-[30px] flex-col items-start pt-[1px]">
            <div className="ml-[12px]"><CloseMark /></div>
            <div className="ml-[11px] mt-[5px] w-4 flex-1 bg-[#f0f0f0]" />
          </div>
          <SpectrumPane />
          <div className="w-[3px]" />
          <TabPanel
            indent="pl-[2px]"
            tabs={<><Tab n="1" kind="pane" className="w-[61px] pl-[13px]" /><Tab n="2" kind="ruler" className="w-[63px] pl-[15px]" /><Tab n="3" kind="spectrum" active className="w-[62px] pl-[16px]" /></>}
          >
            <div className="mt-[11px] flex flex-col">
              <Row label="Colour">
                <Combo label="Green" className="w-[151px]" />
                <div className="flex w-[72px] shrink-0 justify-between"><Knob /><Knob /></div>
              </Row>
              <Row label="Scale">
                <Combo label="dBV" className="w-[90px]" />
                <Combo label="None" className="w-[93px]" />
                <Knob arc />
              </Row>
              <Row label="Window">
                <Combo label="1024" className="w-[76px]" />
                <Combo label="50 %" className="w-[87px]" />
                <Combo label="1x" className="w-[52px]" />
              </Row>
              <Row label="Bins">
                <Combo label="All Bins" className="w-[114px]" />
                <Combo label="Linear" className="w-[108px]" />
              </Row>
            </div>
            <div className="mb-3 ml-[1px] mt-auto flex h-[48px] w-[298px] items-center border border-black border-b-[#8a8a8a] border-r-[#8a8a8a] pb-[2px] pl-[5px] pr-2">
              <div className="flex h-[35px] w-[35px] items-center justify-center border border-[#8a8a8a] border-b-black border-r-black bg-[#3b3b3b]"><Fader className="h-[27px] w-[27px]" /></div>
              <div className="ml-[7px] flex h-[35px] w-[35px] items-center justify-center border border-black border-b-[#8a8a8a] border-r-[#8a8a8a] bg-[repeating-conic-gradient(#5a5a5a_0%_25%,#303030_0%_50%)] bg-[length:2px_2px]">
                <svg className="h-[14px] w-[16px]" viewBox="0 0 16 14"><circle cx="5" cy="7" r="4" fill="#47545a" stroke="#aaa" strokeWidth="0.600" /><circle cx="9" cy="7" r="5.500" fill="#a9bfc5" /><circle cx="9" cy="7" r="2.800" fill="#6d868d" stroke="#eef5f7" strokeWidth="1.200" /></svg>
              </div>
              <span className="ml-auto text-[15px] tracking-[-0.2px]">Show</span>
              <svg className="ml-[7px] h-[21px] w-[21px]" viewBox="0 0 21 21">
                <defs><radialGradient id="led" cx="0.45" cy="0.4"><stop offset="0" stopColor="#e6f6ff" /><stop offset="0.45" stopColor="#7cc4ff" /><stop offset="1" stopColor="#3aa0fa" /></radialGradient></defs>
                <circle cx="10.500" cy="10.500" r="9.500" fill="#222" stroke="#7a7a7a" strokeWidth="1.200" />
                <circle cx="10.500" cy="10.500" r="8" fill="url(#led)" />
              </svg>
            </div>
          </TabPanel>
        </div>
        <div className="flex pl-[11px]">
          <Overview />
          <div className="ml-[5px]"><MasterKnob /></div>
          <div className="ml-[228px] flex h-[47px] w-[47px] items-center justify-center border border-[#8a8a8a] border-b-black border-r-black bg-[#3b3b3b]"><Fader className="h-[35px] w-[35px]" /></div>
        </div>
        <div className="mt-[8px] flex h-[22px] items-center border-b border-[#777]">
          <span className="w-[1906px] border-r border-[#777] pl-[2px] text-[14.5px] leading-[21px] tracking-[-0.18px]">Visible: 16.656 to 21.440 (duration 4.784)</span>
        </div>
      </div>
    </div>
  );
}
